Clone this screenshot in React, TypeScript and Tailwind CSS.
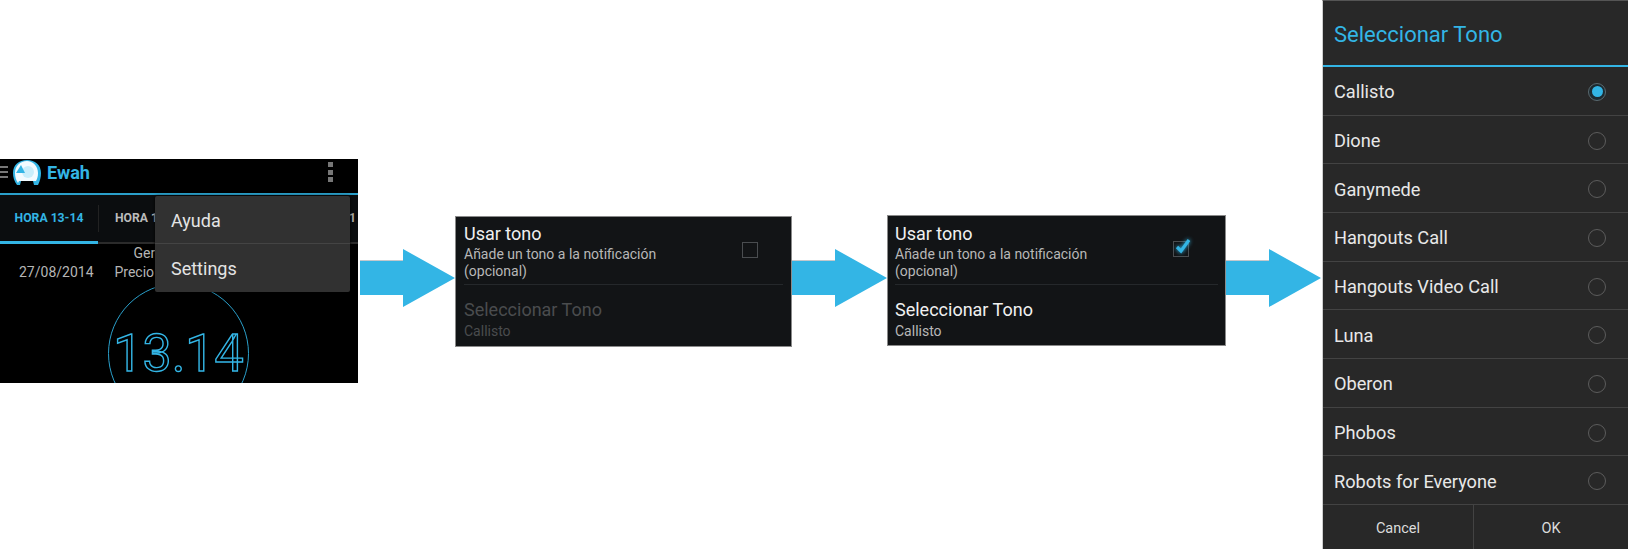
const tones = ["Callisto", "Dione", "Ganymede", "Hangouts Call", "Hangouts Video Call", "Luna", "Oberon", "Phobos", "Robots for Everyone"]

function Arrow() {
  return (
    <svg width="95" height="58" viewBox="0 0 95 58" className="block">
      <path d="M0 12H43V0L95 29L43 58V46H0Z" fill="#33b5e5" />
      <path d="M0 11.5H43" stroke="#c4c8cc" strokeWidth="1" />
    </svg>
  )
}

function Logo() {
  return (
    <svg width="29" height="26" viewBox="0 0 29 26">
      <path d="M4 25C1 21 0 17 0 13C0 5 6 0 14 0C22 0 28 5 28 13C28 17 27 21 25 25H21L20 21H8L7 25Z" fill="#33b5e5" />
      <path d="M5 23C3 20 2 17 2 13C2 6 7 1 14 1C20 1 25 6 25 13C25 17 24 19 23 21H6Z" fill="#f2fbff" />
      <circle cx="15" cy="12" r="6" fill="#c9eefb" />
      <path d="M3 13L8 5L12 13Z" fill="#33b5e5" />
    </svg>
  )
}

function PhonePanel() {
  return (
    <div className="relative mt-[159px] h-[224px] w-[358px] shrink-0 overflow-hidden bg-black font-['Roboto',sans-serif]">
      <div className="flex h-[34px] items-center pb-[8px]">
        <div className="flex w-[8px] shrink-0 flex-col gap-[3px]">
          <div className="h-[2px] bg-[#777]" />
          <div className="h-[2px] bg-[#777]" />
          <div className="h-[2px] bg-[#777]" />
        </div>
        <div className="ml-[5px] mt-[1px] shrink-0">
          <Logo />
        </div>
        <span className="ml-[5px] text-[18px] font-bold text-[#33b5e5]">Ewah</span>
        <div className="ml-auto mr-[25px] flex flex-col gap-[2.5px]">
          <div className="size-[5px] bg-[#777]" />
          <div className="size-[5px] bg-[#777]" />
          <div className="size-[5px] bg-[#777]" />
        </div>
      </div>
      <div className="h-[2px] bg-[#2a9fca]" />
      <div className="flex h-[49px] border-b-2 border-[#2b2b2b] bg-[#0b0d0f] text-[12.2px] font-bold">
        <div className="relative flex w-[98px] items-center justify-center text-[#33b5e5]">
          HORA 13-14
          <div className="absolute -bottom-[2px] left-0 h-[3px] w-full bg-[#33b5e5]" />
        </div>
        <div className="my-[10px] w-px bg-[#222]" />
        <div className="ml-[16px] flex items-center text-[#bbb]">HORA 1</div>
        <div className="ml-auto mr-[2px] flex items-center text-[#aaa]">1</div>
      </div>
      <div className="flex text-[14px] text-[#b5b5b5]">
        <div className="ml-[19px] mt-[18px]">27/08/2014</div>
        <div className="ml-[21px] flex w-[40px] flex-col leading-[19px]">
          <span className="ml-[19px]">Ger</span>
          <span>Precio</span>
        </div>
      </div>
      <div className="absolute left-[108px] top-[124px] flex size-[141px] items-start justify-center rounded-full border border-[#2a9fca] pt-[40px]">
        <span className="text-[52px] font-normal leading-[60px] text-black [-webkit-text-stroke:1.4px_#33b5e5]">13.14</span>
      </div>
      <div className="absolute left-[155px] top-[37px] w-[195px] rounded-[2px] bg-[#313131] text-[18px] text-[#e4e4e4] shadow-[0_0_3px_#000]">
        <div className="flex h-[48px] items-center border-b border-[#444] pl-[16px] pt-[1px]">Ayuda</div>
        <div className="flex h-[48px] items-center pl-[16px] pt-[1px]">Settings</div>
      </div>
    </div>
  )
}

function TonePanel({ enabled, width, top }: { enabled: boolean; width: string; top: string }) {
  return (
    <div className={`${width} ${top} h-[131px] shrink-0 border border-[#8a8a8a] bg-[#121416] font-['Roboto',sans-serif] ${enabled ? "px-[7px]" : "px-[8px]"}`}>
      <div className={`flex border-b border-[#25282b] ${enabled ? "h-[69px]" : "h-[68px]"}`}>
        <div className={`flex-1 ${enabled ? "pt-[6px]" : "pt-[5px]"}`}>
          <div className="text-[18px] leading-[24px] text-[#f0f0f0]">Usar tono</div>
          <div className="text-[14px] leading-[17px] text-[#b8b8b8]">
            Añade un tono a la notificación
            <br />
            (opcional)
          </div>
        </div>
        <div className={`relative mt-[25px] size-[16px] border border-[#4a4d50] ${enabled ? "mr-[29px]" : "mr-[25px]"}`}>
          {enabled && (
            <svg width="20" height="18" viewBox="0 0 20 18" className="absolute -left-[1px] -top-[5px] drop-shadow-[0_0_2px_#33b5e5]">
              <path d="M4 10L8 14L16 3" fill="none" stroke="#33b5e5" strokeWidth="3.2" />
            </svg>
          )}
        </div>
      </div>
      <div className="pt-[13px]">
        <div className={`text-[18px] leading-[24px] ${enabled ? "text-[#f0f0f0]" : "text-[#4a4c4e]"}`}>Seleccionar Tono</div>
        <div className={`mt-[1px] text-[14px] leading-[17px] ${enabled ? "text-[#b8b8b8]" : "text-[#4a4c4e]"}`}>Callisto</div>
      </div>
    </div>
  )
}

function ToneDialog() {
  return (
    <div className="ml-[1px] flex h-[549px] flex-1 flex-col border-l border-t border-l-[#cfcfcf] border-t-[#555] bg-[#282828] font-['Roboto',sans-serif]">
      <div className="flex h-[66px] items-center border-b-2 border-[#33b5e5] pl-[11px] pt-[2px] text-[22px] text-[#33b5e5]">
        Seleccionar Tono
      </div>
      <div className="flex h-[438px] flex-col">
        {tones.map((tone, i) => (
          <div key={tone} className="flex flex-1 items-center justify-between border-b border-[#434343] pl-[11px] pr-[22px] pt-[2px] text-[18.2px] text-[#e8e8e8]">
            <span>{tone}</span>
            <div className={`flex size-[18px] items-center justify-center rounded-full border ${i === 0 ? "border-[#5a6a70] bg-[#1c2a30]" : "border-[#5c5c5c]"}`}>
              {i === 0 && <div className="size-[11px] rounded-full bg-[#33b5e5]" />}
            </div>
          </div>
        ))}
      </div>
      <div className="flex flex-1 text-[14.5px] text-[#dcdcdc]">
        <div className="flex w-[151px] items-center justify-center border-r border-[#434343] pt-[3px]">Cancel</div>
        <div className="flex flex-1 items-center justify-center pt-[3px]">OK</div>
      </div>
    </div>
  )
}

export default function App() {
  return (
    <div className="flex h-[549px] w-[1628px] items-start overflow-hidden bg-white">
      <PhonePanel />
      <div className="ml-[2px] mt-[249px] shrink-0">
        <Arrow />
      </div>
      <TonePanel enabled={false} width="w-[337px]" top="mt-[216px]" />
      <div className="mt-[249px] shrink-0">
        <Arrow />
      </div>
      <TonePanel enabled width="w-[339px]" top="mt-[215px]" />
      <div className="mt-[249px] shrink-0">
        <Arrow />
      </div>
      <ToneDialog />
    </div>
  )
}
